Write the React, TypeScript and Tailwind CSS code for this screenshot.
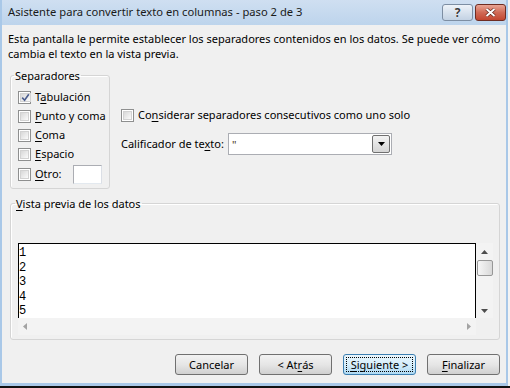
import React from "react";

const FONT = "font-['Noto_Sans','Liberation_Sans',sans-serif]";

function U({ children }: { children: React.ReactNode }) {
  return <span className="underline decoration-1 underline-offset-[2px]">{children}</span>;
}

function Box({ checked }: { checked?: boolean }) {
  return (
    <span className="flex w-[13px] h-[13px] shrink-0 border border-[#8e8f8f] bg-white p-px">
      <span className="flex flex-1 items-center justify-center border border-[#d2d2d2] bg-linear-to-br from-[#d8d8d8] to-[#fbfbfb]">
        {checked && (
          <svg width="9" height="9" viewBox="0 0 9 9">
            <path d="M1.2 4.6 L3.6 7.2 L7.8 1.2" fill="none" stroke="#4b5d8e" strokeWidth="1.6" />
          </svg>
        )}
      </span>
    </span>
  );
}

function Check({ checked, children }: { checked?: boolean; children: React.ReactNode }) {
  return (
    <div className="flex h-[19px] items-center gap-[4px] whitespace-nowrap">
      <Box checked={checked} />
      <span>{children}</span>
    </div>
  );
}

function Btn({ children, focus }: { children: React.ReactNode; focus?: boolean }) {
  return (
    <div
      className={
        focus
          ? "w-[73px] h-[21px] rounded-[3px] border border-[#3c7fb1] bg-linear-to-b from-[#e9f5fc] via-[#d6eefb] to-[#aed9f3] p-[2px]"
          : "w-[73px] h-[21px] rounded-[3px] border border-[#707070] bg-linear-to-b from-[#f2f2f2] via-[#e6e6e6] to-[#d0d0d0] p-[2px]"
      }
    >
      <div
        className={
          focus
            ? "flex h-full items-center justify-center whitespace-nowrap border border-dotted border-black leading-none"
            : "flex h-full items-center justify-center whitespace-nowrap leading-none"
        }
      >
        {children}
      </div>
    </div>
  );
}

function Tri({ dir, color = "#4d4d4d" }: { dir: "up" | "down" | "left" | "right"; color?: string }) {
  const pts =
    dir === "up" ? "0,4 3.5,0 7,4" : dir === "down" ? "0,0 7,0 3.5,4" : dir === "left" ? "4,0 4,7 0,3.5" : "0,0 4,3.5 0,7";
  const w = dir === "up" || dir === "down" ? 7 : 4;
  const h = dir === "up" || dir === "down" ? 4 : 7;
  return (
    <svg width={w} height={h} viewBox={`0 0 ${w} ${h}`}>
      <polygon points={pts} fill={color} />
    </svg>
  );
}

export default function App() {
  return (
    <div className={`w-[510px] h-[388px] bg-[#f4f4f4] overflow-hidden text-[11px] text-black ${FONT}`}>
      <div className="flex w-[508px] h-[386px] flex-col border-x-2 border-b-[3px] border-[#a9c8e8] bg-[#f0f0f0]">
        {/* title bar */}
        <div className="flex h-[25px] items-center justify-between bg-linear-to-b from-[#cfdff1] to-[#bdd4ec] pl-[6px]">
          <span className="whitespace-nowrap text-[11.2px] text-[#1a1a1a]">
            Asistente para convertir texto en columnas - paso 2 de 3
          </span>
          <div className="flex h-full items-start gap-[2px] pt-[4px]">
            <div className="flex w-[31px] h-[17px] items-center justify-center rounded-[3px] border border-[#7d8ea3] bg-linear-to-b from-[#eef3f9] to-[#c3d2e3]">
              <span className="text-[12px] font-bold leading-none text-[#3a3a3a] [text-shadow:0_0_1px_#fff]">?</span>
            </div>
            <div className="flex w-[31px] h-[17px] items-center justify-center rounded-[3px] border border-[#6e2c22] bg-linear-to-b from-[#e9a595] via-[#d06a56] to-[#c2452f]">
              <svg width="11" height="9" viewBox="0 0 11 9">
                <path d="M1.5 1 L9.5 8 M9.5 1 L1.5 8" stroke="#5a1e14" strokeWidth="3.2" />
                <path d="M1.5 1 L9.5 8 M9.5 1 L1.5 8" stroke="#ffffff" strokeWidth="2" />
              </svg>
            </div>
          </div>
        </div>

        {/* body */}
        <div className="flex flex-1 flex-col">
          <p className="whitespace-nowrap pl-[6px] pt-[6px] leading-[15px]">
            Esta pantalla le permite establecer los separadores contenidos en los datos. Se puede ver cómo
            <br />
            cambia el texto en la vista previa.
          </p>

          <div className="mt-[7px] flex">
            <fieldset className="ml-[8px] h-[121px] w-[100px] rounded-[3px] border border-[#d5d5d5] shadow-[inset_1px_1px_0_#fff]">
              <legend className="ml-[3px] px-[1px] leading-[15px]">Separadores</legend>
              <div className="flex flex-col pl-[7px] pt-[5px]">
                <Check checked>
                  T<U>a</U>bulación
                </Check>
                <Check>
                  <U>P</U>unto y coma
                </Check>
                <Check>
                  <U>C</U>oma
                </Check>
                <Check>
                  <U>E</U>spacio
                </Check>
                <div className="flex h-[21px] items-center gap-[4px]">
                  <Box />
                  <span>
                    <U>O</U>tro:
                  </span>
                  <div className="ml-[7px] h-[19px] w-[29px] border border-[#abadb3] border-b-[#e3e9ef] border-r-[#dbdfe6] bg-white" />
                </div>
              </div>
            </fieldset>

            <div className="ml-[11px] flex flex-col">
              <div className="mt-[38px] flex h-[19px] items-center gap-[4px] whitespace-nowrap">
                <Box />
                <span>
                  Co<U>n</U>siderar separadores consecutivos como uno solo
                </span>
              </div>
              <div className="mt-[8px] flex h-[22px] items-center">
                <span className="w-[107px] whitespace-nowrap">
                  Calificador de te<U>x</U>to:
                </span>
                <div className="flex h-[22px] w-[164px] items-center border border-[#abadb3] bg-white pr-[1px]">
                  <span className="flex-1 pl-[3px] text-[11px] leading-none text-[#4a3a1a]">"</span>
                  <div className="flex h-[18px] w-[18px] items-center justify-center rounded-[2px] border border-[#707070] bg-linear-to-b from-[#f3f3f3] to-[#d5d5d5]">
                    <Tri dir="down" color="#000" />
                  </div>
                </div>
              </div>
            </div>
          </div>

          <fieldset className="ml-[8px] mt-[7px] h-[144px] w-[490px] rounded-[3px] border border-[#d5d5d5] shadow-[inset_1px_1px_0_#fff]">
            <legend className="ml-[4px] px-[1px] leading-[15px]">
              <U>V</U>ista previa de los datos
            </legend>
            <div className="ml-[7px] mt-[32px] grid grid-cols-[458px_17px] grid-rows-[75px_17px]">
              <div className="border-x border-t border-black bg-white pt-[2px] font-['Liberation_Mono',monospace] text-[12px] leading-[14.5px]">
                <div>1</div>
                <div>2</div>
                <div>3</div>
                <div>4</div>
                <div>5</div>
              </div>
              <div className="flex flex-col items-center bg-[#f3f3f3]">
                <div className="flex h-[17px] items-center">
                  <Tri dir="up" />
                </div>
                <div className="h-[16px] w-[16px] rounded-[2px] border border-[#979797] bg-linear-to-r from-[#f6f6f6] to-[#d9d9d9]" />
                <div className="flex-1" />
                <div className="flex h-[15px] items-center">
                  <Tri dir="down" />
                </div>
              </div>
              <div className="flex items-center justify-between bg-[#f3f3f3] px-[5px]">
                <Tri dir="left" color="#a3a3a3" />
                <Tri dir="right" color="#a3a3a3" />
              </div>
              <div />
            </div>
          </fieldset>

          <div className="mt-[14px] flex justify-end gap-[11px] pr-[6px]">
            <Btn>Cancelar</Btn>
            <Btn>
              &lt; At<U>r</U>ás
            </Btn>
            <Btn focus>
              <U>S</U>iguiente &gt;
            </Btn>
            <Btn>
              <U>F</U>inalizar
            </Btn>
          </div>
        </div>
      </div>
      <div className="h-[2px] bg-[#111]" />
    </div>
  );
}
